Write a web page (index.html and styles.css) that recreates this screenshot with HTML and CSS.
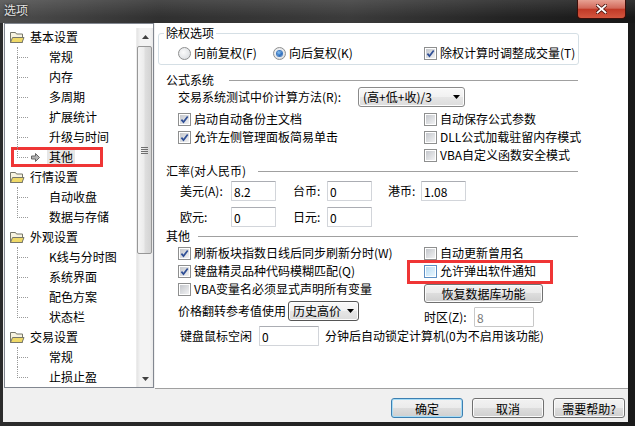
FILE: index.html
```html
<!DOCTYPE html>
<html lang="zh-CN">
  <head>
    <meta charset="UTF-8" />
    <title>选项</title>
    <link rel="stylesheet" href="styles.css">
  </head>
  <body>
    <div class="window">
      <div class="titlebar">
        <span class="title">选项</span>
        <div class="close">
          <svg width="11" height="10" viewBox="0 0 11 10">
            <path d="M1.5 1.5l8 7M9.5 1.5l-8 7" stroke="#4a130c" stroke-width="3.4" stroke-linecap="square"/>
            <path d="M1.5 1.5l8 7M9.5 1.5l-8 7" stroke="#fff" stroke-width="1.8" stroke-linecap="square"/>
          </svg>
        </div>
      </div>

      <div class="client">
        <div class="main">
          <div class="tree">
            <div class="tree-list">
              <div class="node">
                <svg class="folder" width="16" height="13" viewBox="0 0 16 13">
                  <path d="M1.5 1.5h5l1 1.5h6v8.5h-12z" fill="#f7f3e0" stroke="#77776a"/>
                  <path d="M1.5 11.5l2-5h11.5l-2 5z" fill="#efd967" stroke="#77776a"/>
                </svg>基本设置
              </div>
              <ul class="kids">
                <li><span class="slot"></span>常规</li>
                <li><span class="slot"></span>内存</li>
                <li><span class="slot"></span>多周期</li>
                <li><span class="slot"></span>扩展统计</li>
                <li><span class="slot"></span>升级与时间</li>
                <li>
                  <span class="slot">
                    <svg width="9" height="9" viewBox="0 0 9 9">
                      <path d="M0.5 3h4v-2.5l4 4-4 4v-2.5h-4z" fill="#b4b4b4" stroke="#666"/>
                    </svg>
                  </span><span class="sel">其他</span>
                  <span class="mark tree-mark"></span>
                </li>
              </ul>

              <div class="node">
                <svg class="folder" width="16" height="13" viewBox="0 0 16 13">
                  <path d="M1.5 1.5h5l1 1.5h6v8.5h-12z" fill="#f7f3e0" stroke="#77776a"/>
                  <path d="M1.5 11.5l2-5h11.5l-2 5z" fill="#efd967" stroke="#77776a"/>
                </svg>行情设置
              </div>
              <ul class="kids">
                <li><span class="slot"></span>自动收盘</li>
                <li><span class="slot"></span>数据与存储</li>
              </ul>

              <div class="node">
                <svg class="folder" width="16" height="13" viewBox="0 0 16 13">
                  <path d="M1.5 1.5h5l1 1.5h6v8.5h-12z" fill="#f7f3e0" stroke="#77776a"/>
                  <path d="M1.5 11.5l2-5h11.5l-2 5z" fill="#efd967" stroke="#77776a"/>
                </svg>外观设置
              </div>
              <ul class="kids">
                <li><span class="slot"></span>K线与分时图</li>
                <li><span class="slot"></span>系统界面</li>
                <li><span class="slot"></span>配色方案</li>
                <li><span class="slot"></span>状态栏</li>
              </ul>

              <div class="node">
                <svg class="folder" width="16" height="13" viewBox="0 0 16 13">
                  <path d="M1.5 1.5h5l1 1.5h6v8.5h-12z" fill="#f7f3e0" stroke="#77776a"/>
                  <path d="M1.5 11.5l2-5h11.5l-2 5z" fill="#efd967" stroke="#77776a"/>
                </svg>交易设置
              </div>
              <ul class="kids">
                <li><span class="slot"></span>常规</li>
                <li><span class="slot"></span>止损止盈</li>
              </ul>
            </div>

            <div class="vscroll">
              <div class="sb-btn">
                <svg width="7" height="4" viewBox="0 0 7 4"><path d="M3.5 0L7 4H0z" fill="#404040"/></svg>
              </div>
              <div class="sb-thumb">
                <svg width="7" height="7" viewBox="0 0 7 7">
                  <path d="M0 0.5h7M0 2.5h7M0 4.5h7M0 6.5h7" stroke="#6e6e6e"/>
                </svg>
              </div>
              <div class="sb-track"></div>
              <div class="sb-btn">
                <svg width="7" height="4" viewBox="0 0 7 4"><path d="M0 0H7L3.5 4z" fill="#404040"/></svg>
              </div>
            </div>
          </div>

          <div class="panel">
            <fieldset class="group">
              <legend>除权选项</legend>
              <div class="radio-row">
                <label class="opt"><span class="rb"></span>向前复权(F)</label>
                <label class="opt"><span class="rb on"><i></i></span>向后复权(K)</label>
                <label class="opt">
                  <span class="cb"><svg width="9" height="9" viewBox="0 0 9 9"><path d="M1.4 4.6l2.1 2.5 4.2-5.6"/></svg></span>除权计算时调整成交量(T)
                </label>
              </div>
            </fieldset>

            <section class="sec">
              <div class="sec-head g15">公式系统</div>
              <div class="sec-body">
                <div class="calc-row">
                  <span class="calc-label">交易系统测试中价计算方法(R):</span>
                  <div class="combo calc">
                    <span>(高+低+收)/3</span>
                    <svg width="7" height="4" viewBox="0 0 7 4"><path d="M0 0H7L3.5 4z" fill="#000"/></svg>
                  </div>
                </div>
                <div class="cols top3">
                  <div class="col">
                    <label class="opt r18">
                      <span class="cb"><svg width="9" height="9" viewBox="0 0 9 9"><path d="M1.4 4.6l2.1 2.5 4.2-5.6"/></svg></span>启动自动备份主文档
                    </label>
                    <label class="opt r18">
                      <span class="cb"><svg width="9" height="9" viewBox="0 0 9 9"><path d="M1.4 4.6l2.1 2.5 4.2-5.6"/></svg></span>允许左侧管理面板简易单击
                    </label>
                  </div>
                  <div class="col">
                    <label class="opt r18"><span class="cb"></span>自动保存公式参数</label>
                    <label class="opt r18"><span class="cb"></span>DLL公式加载驻留内存模式</label>
                    <label class="opt r18"><span class="cb"></span>VBA自定义函数安全模式</label>
                  </div>
                </div>
              </div>
            </section>

            <section class="sec">
              <div class="sec-head g12">汇率(对人民币)</div>
              <div class="rates">
                <div class="rate-row">
                  <div class="pair"><span class="k k51">美元(A):</span><input class="tb w45" value="8.2"></div>
                  <div class="pair"><span class="k k34">台币:</span><input class="tb w45" value="0"></div>
                  <div class="pair"><span class="k k33">港币:</span><input class="tb w45" value="1.08"></div>
                </div>
                <div class="rate-row second">
                  <div class="pair"><span class="k k51">欧元:</span><input class="tb w45" value="0"></div>
                  <div class="pair"><span class="k k34">日元:</span><input class="tb w45" value="0"></div>
                </div>
              </div>
            </section>

            <section class="sec other">
              <div class="sec-head">其他</div>
              <div class="sec-body">
                <div class="cols top1">
                  <div class="col">
                    <label class="opt r18">
                      <span class="cb"><svg width="9" height="9" viewBox="0 0 9 9"><path d="M1.4 4.6l2.1 2.5 4.2-5.6"/></svg></span>刷新板块指数日线后同步刷新分时(W)
                    </label>
                    <label class="opt r18">
                      <span class="cb"><svg width="9" height="9" viewBox="0 0 9 9"><path d="M1.4 4.6l2.1 2.5 4.2-5.6"/></svg></span>键盘精灵品种代码模糊匹配(Q)
                    </label>
                    <label class="opt r18"><span class="cb"></span>VBA变量名必须显式声明所有变量</label>
                    <div class="price-row">
                      <span>价格翻转参考值使用</span>
                      <div class="combo price">
                        <span>历史高价</span>
                        <svg width="7" height="4" viewBox="0 0 7 4"><path d="M0 0H7L3.5 4z" fill="#000"/></svg>
                      </div>
                    </div>
                    <div class="idle-row">
                      <span>键盘鼠标空闲</span>
                      <input class="tb w60" value="0">
                      <span>分钟后自动锁定计算机(0为不启用该功能)</span>
                    </div>
                  </div>
                  <div class="col">
                    <label class="opt r18"><span class="cb"></span>自动更新曾用名</label>
                    <label class="opt r18 notify"><span class="cb hot"></span>允许弹出软件通知<span class="mark opt-mark"></span></label>
                    <button class="btn restore">恢复数据库功能</button>
                    <div class="tz-row">
                      <span class="k k50">时区(Z):</span><input class="tb w60 off" value="8" disabled>
                    </div>
                  </div>
                </div>
              </div>
            </section>
          </div>
        </div>

        <div class="footer">
          <button class="btn def">确定</button>
          <button class="btn">取消</button>
          <button class="btn">需要帮助?</button>
        </div>
      </div>
    </div>
  </body>
</html>
```

FILE: styles.css
```css
* {
  box-sizing: border-box;
}
body {
  margin: 0;
  background: #1b1b1b;
  font-family: "Noto Sans CJK SC", "Noto Sans", sans-serif;
  font-size: 12px;
  line-height: 14px;
  color: #000;
}
ul {
  list-style: none;
  margin: 0;
  padding: 0;
}

/* window frame */
.window {
  width: 635px;
  height: 426px;
  display: flex;
  flex-direction: column;
  background: linear-gradient(to right, #2c2c2c, #1a1a1a);
}
.titlebar {
  height: 23px;
  flex: none;
  display: flex;
  justify-content: space-between;
  background:
    linear-gradient(to bottom, rgba(255, 255, 255, 0.12), rgba(255, 255, 255, 0) 75%),
    linear-gradient(to right, #4e4e4e, #303030 25%, #3b3b3b 55%, #232323 80%, #171717);
}
.title {
  padding: 3px 0 0 4px;
  color: #e4e4e4;
  text-shadow: 0 0 3px #000;
}
.close {
  width: 49px;
  height: 19px;
  margin-right: 9px;
  border: 1px solid #3b0f0a;
  border-top: 0;
  border-radius: 0 0 4px 4px;
  background: linear-gradient(#e7a193, #d2695a 45%, #c13a27 52%, #d4563f);
  display: flex;
  align-items: center;
  justify-content: center;
}
.client {
  flex: 1;
  margin: 0 7px 4px 3px;
  background: #f0f0f0;
  display: flex;
  flex-direction: column;
}
.main {
  display: flex;
  height: 366px;
}

/* tree */
.tree {
  width: 150px;
  margin: 0 1px 1px 1px;
  border: 1px solid #828790;
  background: #fff;
  display: flex;
}
.tree-list {
  flex: 1;
  padding-top: 3px;
}
.node {
  height: 20px;
  display: flex;
  align-items: center;
  gap: 5px;
  padding-left: 4px;
}
.kids {
  margin-left: 12px;
}
.kids li {
  position: relative;
  height: 20px;
  display: flex;
  align-items: center;
  padding-left: 14px;
}
.kids li::before {
  content: "";
  position: absolute;
  left: 0;
  top: 10px;
  width: 11px;
  border-top: 1px dotted #9a9a9a;
}
.kids li::after {
  content: "";
  position: absolute;
  left: 0;
  top: 0;
  height: 20px;
  border-left: 1px dotted #9a9a9a;
}
.kids li:last-child::after {
  height: 11px;
}
.slot {
  width: 18px;
  display: flex;
  align-items: center;
}
.sel {
  background: #e6e6e6;
  padding: 1px 2px;
  margin-left: -2px;
}
.mark {
  position: absolute;
  border: 3px solid #ef3535;
}
.tree-mark {
  left: -6px;
  top: 0;
  width: 92px;
  height: 20px;
}

.vscroll {
  width: 17px;
  margin-top: 4px;
  display: flex;
  flex-direction: column;
  border-left: 1px solid #ececec;
  background: linear-gradient(to right, #e4e4e4, #f3f3f3 20%, #f3f3f3 80%, #e9e9e9);
}
.sb-btn {
  height: 17px;
  display: flex;
  align-items: center;
  justify-content: center;
}
.sb-thumb {
  height: 208px;
  margin: 1px 1px 0 0;
  border: 1px solid #979797;
  border-radius: 2px;
  background: linear-gradient(to right, #f5f5f5, #ececec 45%, #dedede 55%, #d3d3d3);
  display: flex;
  align-items: center;
  justify-content: center;
}
.sb-track {
  flex: 1;
}

/* right panel */
.panel {
  flex: 1;
  background: #fff;
  border-bottom: 1px solid #a0a0a0;
  padding-top: 3px;
}
.group {
  width: 421px;
  margin: 0 0 0 3px;
  padding: 5px 0 3px 0;
  border: 1px solid #d5dfe5;
  border-radius: 3px;
}
.group legend {
  margin-left: 5px;
  padding: 0 2px;
  line-height: 14px;
}
.radio-row {
  display: grid;
  grid-template-columns: 95px 151px auto;
  height: 16px;
  align-items: center;
  padding-left: 19px;
}
.opt {
  position: relative;
  display: flex;
  align-items: center;
  gap: 3px;
  white-space: nowrap;
}
.r18 {
  height: 18px;
}

/* radio and checkbox */
.rb {
  width: 13px;
  height: 13px;
  flex: none;
  border: 1px solid #8e8f8f;
  border-radius: 50%;
  background: radial-gradient(circle at 40% 40%, #fafafa, #d5d8dc);
  display: flex;
  align-items: center;
  justify-content: center;
}
.rb i {
  width: 5px;
  height: 5px;
  border-radius: 50%;
  background: radial-gradient(circle at 40% 35%, #8cc8f6, #1b5db4 70%);
  box-shadow: 0 0 0 1px #3d79c0;
}
.cb {
  width: 13px;
  height: 13px;
  flex: none;
  padding: 1px;
  border: 1px solid #8e8f8f;
  background: #fff linear-gradient(135deg, #c4c7cc, #f1f2f3) content-box no-repeat;
}
.cb svg {
  display: block;
  overflow: visible;
}
.cb path {
  fill: none;
  stroke: #2f4f96;
  stroke-width: 1.7;
}
.cb.hot {
  border-color: #5d8fc4;
  background: #f3faff linear-gradient(135deg, #b9dcf4, #eaf6fd) content-box no-repeat;
}
.opt-mark {
  left: -17px;
  top: -2px;
  width: 146px;
  height: 24px;
}

/* sections */
.sec {
  width: 412px;
  margin-left: 11px;
}
.sec + .sec,
.group + .sec {
  margin-top: 8px;
}
.sec.other {
  margin-top: 2px;
}
.group + .sec + .sec {
  margin-top: 0;
}
.sec-head {
  height: 14px;
  display: flex;
  align-items: center;
  gap: 8px;
  white-space: nowrap;
}
.sec-head::after {
  content: "";
  flex: 1;
  border-top: 1px solid #a0a0a0;
}
.sec-head.g15 {
  gap: 15px;
}
.sec-head.g12 {
  gap: 12px;
}
.sec-body {
  padding-left: 12px;
}
.calc-row {
  display: flex;
  align-items: center;
  height: 20px;
}
.calc-label {
  width: 180px;
  white-space: nowrap;
}
.cols {
  display: grid;
  grid-template-columns: 246px 1fr;
  align-items: start;
}
.cols.top3 {
  margin-top: 3px;
}
.cols.top1 {
  margin-top: 1px;
}
.col {
  display: flex;
  flex-direction: column;
}

/* combo box */
.combo {
  height: 20px;
  display: flex;
  align-items: center;
  justify-content: space-between;
  padding: 0 4px 0 4px;
  border: 1px solid #8a8a8a;
  border-radius: 3px;
  background: linear-gradient(#f9f9f9, #f1f1f1 50%, #e6e6e6 50%, #dcdcdc);
  box-shadow: inset 0 0 0 1px #fdfdfd;
  white-space: nowrap;
}
.combo.calc {
  width: 107px;
}
.combo.price {
  width: 71px;
  border-color: #555;
}

/* text boxes */
.tb {
  height: 20px;
  padding: 0 2px;
  font-family: inherit;
  font-size: 12px;
  color: #000;
  background: #fff;
  border: 1px solid #d2d5da;
  border-top-color: #abadb3;
  border-radius: 1px;
  outline: none;
}
.tb.w45 {
  width: 45px;
}
.tb.w60 {
  width: 60px;
}
.tb.off {
  color: #7a7a7a;
  border-color: #c8c8c8;
}

/* exchange rates */
.rates {
  padding-left: 14px;
}
.rate-row {
  display: grid;
  grid-template-columns: 113px 95px auto;
  height: 20px;
  margin-top: 3px;
}
.rate-row.second {
  margin-top: 6px;
}
.pair {
  display: flex;
  align-items: center;
}
.k {
  white-space: nowrap;
}
.k51 {
  width: 51px;
}
.k34 {
  width: 34px;
}
.k33 {
  width: 33px;
}
.k50 {
  width: 50px;
}

/* other */
.price-row {
  display: flex;
  align-items: center;
  gap: 2px;
  height: 20px;
  margin-top: 3px;
  white-space: nowrap;
}
.idle-row {
  display: flex;
  align-items: center;
  gap: 7px;
  height: 20px;
  margin-top: 5px;
  padding-left: 2px;
  white-space: nowrap;
}
.idle-row .tb {
  margin-right: -1px;
}
.tz-row {
  display: flex;
  align-items: center;
  height: 20px;
  margin-top: 4px;
}

/* buttons */
.btn {
  width: 72px;
  height: 20px;
  padding: 0;
  font-family: inherit;
  font-size: 12px;
  color: #000;
  border: 1px solid #707070;
  border-radius: 3px;
  background: linear-gradient(#f2f2f2, #ebebeb 50%, #dddddd 50%, #cfcfcf);
  box-shadow: inset 0 0 0 1px #fbfbfb;
}
.btn.def {
  border-color: #3c7fb1;
  box-shadow: inset 0 0 0 1px #a6dcf6;
}
.btn.restore {
  width: 119px;
  height: 19px;
  margin-top: 4px;
}
.footer {
  flex: 1;
  display: flex;
  justify-content: flex-end;
  align-items: flex-start;
  gap: 9px;
  padding: 9px 3px 0 0;
}
```
